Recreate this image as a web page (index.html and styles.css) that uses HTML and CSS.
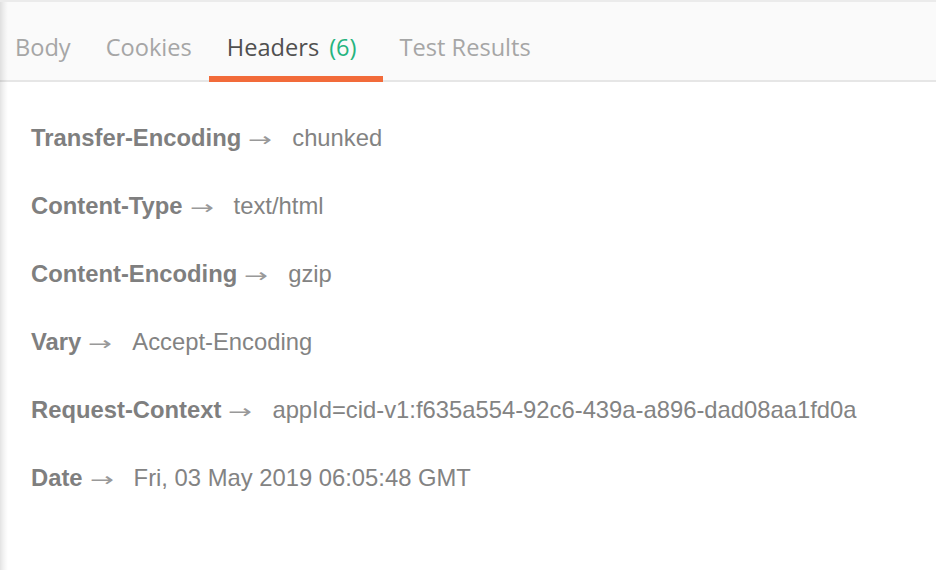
FILE: index.html
```html
<!DOCTYPE html>
<html>
<head>
<meta charset="utf-8">
<link rel="stylesheet" href="styles.css">
</head>
<body>
<div class="pane">
  <nav class="tabs">
    <div class="tab">Body</div>
    <div class="tab">Cookies</div>
    <div class="tab active">Headers<span class="count">(6)</span></div>
    <div class="tab">Test Results</div>
  </nav>
  <div class="headers">
    <div class="row"><span class="key">Transfer-Encoding</span><span class="arrow">→</span><span class="val">chunked</span></div>
    <div class="row"><span class="key">Content-Type</span><span class="arrow">→</span><span class="val">text/html</span></div>
    <div class="row"><span class="key">Content-Encoding</span><span class="arrow">→</span><span class="val">gzip</span></div>
    <div class="row"><span class="key">Vary</span><span class="arrow">→</span><span class="val">Accept-Encoding</span></div>
    <div class="row"><span class="key">Request-Context</span><span class="arrow">→</span><span class="val">appId=cid-v1:f635a554-92c6-439a-a896-dad08aa1fd0a</span></div>
    <div class="row"><span class="key">Date</span><span class="arrow">→</span><span class="val">Fri, 03 May 2019 06:05:48 GMT</span></div>
  </div>
</div>
</body>
</html>
```
FILE: styles.css
```css
html, body {
  margin: 0;
  padding: 0;
  background: #fff;
}
.pane {
  width: 936px;
  height: 570px;
  box-sizing: border-box;
  border-top: 2px solid #ebebeb;
  position: relative;
}
.pane::before {
  content: "";
  position: absolute;
  left: 0;
  top: 0;
  bottom: 0;
  width: 8px;
  background: linear-gradient(to right, rgba(0,0,0,0.11) 0px, rgba(0,0,0,0.06) 3px, rgba(0,0,0,0.02) 6px, rgba(0,0,0,0) 8px);
}
.tabs {
  display: flex;
  height: 80px;
  padding-left: 7px;
  background: #fafafa;
  border-bottom: 2px solid #e6e6e6;
  font-family: "Open Sans", sans-serif;
  font-size: 23.6px;
  box-sizing: border-box;
}
.tab {
  display: flex;
  align-items: center;
  padding: 14px 17px 0 17px;
  color: #a6a6a6;
  position: relative;
  line-height: 1;
}
.tab:first-child {
  padding-left: 8px;
  padding-right: 18px;
}
.tab.active {
  color: #505050;
  padding-left: 18px;
  padding-right: 26px;
}
.tab.active::after {
  content: "";
  position: absolute;
  left: 0;
  right: 0;
  bottom: -2px;
  height: 6px;
  background: #f26b3a;
}
.count {
  color: #26b47f;
  margin-left: 10px;
}
.headers {
  padding: 30px 0 0 31px;
  font-family: "Liberation Sans", Arial, sans-serif;
  font-size: 23.8px;
  color: #808080;
}
.row {
  height: 68px;
  line-height: 52px;
  white-space: nowrap;
}
.key {
  font-weight: bold;
  color: #7f7f7f;
}
.arrow {
  display: inline-block;
  margin-left: 7px;
  margin-right: 20px;
  width: 24px;
  font-family: "DejaVu Sans", sans-serif;
  font-size: 19px;
  transform: scaleX(1.5);
  transform-origin: left center;
  color: #999999;
}
.val {
  color: #838383;
}
```
